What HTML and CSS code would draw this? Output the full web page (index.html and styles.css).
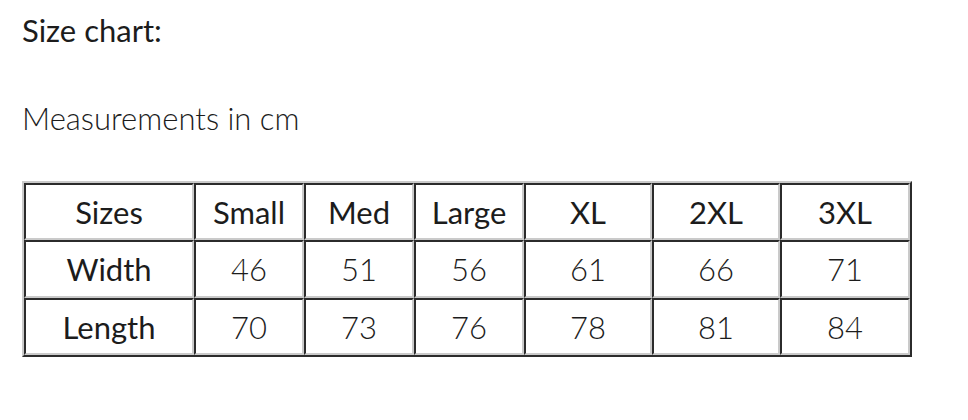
FILE: index.html
```html
<!DOCTYPE html>
<html>
<head>
<meta charset="utf-8">
<link rel="stylesheet" href="styles.css">
</head>
<body>
<div class="page">
  <p class="title">Size chart:</p>
  <p class="note">Measurements in cm</p>
  <table class="chart">
    <tr class="r1">
      <th class="c1">Sizes</th><th class="c2">Small</th><th class="c3">Med</th><th class="c4">Large</th><th class="c5">XL</th><th class="c6">2XL</th><th class="c7">3XL</th>
    </tr>
    <tr class="r2">
      <th>Width</th><td>46</td><td>51</td><td>56</td><td>61</td><td>66</td><td>71</td>
    </tr>
    <tr class="r3">
      <th>Length</th><td>70</td><td>73</td><td>76</td><td>78</td><td>81</td><td>84</td>
    </tr>
  </table>
</div>
</body>
</html>
```
FILE: styles.css
```css
html, body {
  margin: 0;
  padding: 0;
  background: #fff;
}
.page {
  padding: 0 0 0 22px;
  font-family: Lato, "Liberation Sans", sans-serif;
  color: #1c1c1c;
}
.title {
  margin: 0;
  padding-top: 12px;
  font-size: 31px;
  line-height: 36px;
  font-weight: 400;
}
.note {
  margin: 0;
  padding-top: 52px;
  font-size: 31px;
  line-height: 36px;
  font-weight: 300;
}
.chart {
  margin-top: 45px;
  border-collapse: separate;
  border-spacing: 0;
  table-layout: fixed;
  width: 890px;
  border: 2px solid;
  border-color: #cacaca #2b2b2b #2b2b2b #cacaca;
}
.chart th, .chart td {
  box-sizing: border-box;
  padding: 0;
  text-align: center;
  vertical-align: middle;
  font-size: 31px;
  border: 2px solid;
  border-color: #2b2b2b #cacaca #cacaca #2b2b2b;
}
.chart th {
  font-weight: 400;
}
.chart td {
  font-weight: 300;
}
.r1 th { height: 57px; }
.r2 th, .r2 td { height: 58px; }
.r3 th, .r3 td { height: 57px; }
.c1 { width: 170px; }
.c2, .c3, .c4 { width: 110px; }
.c5, .c6 { width: 128px; }
.c7 { width: 130px; }
```
